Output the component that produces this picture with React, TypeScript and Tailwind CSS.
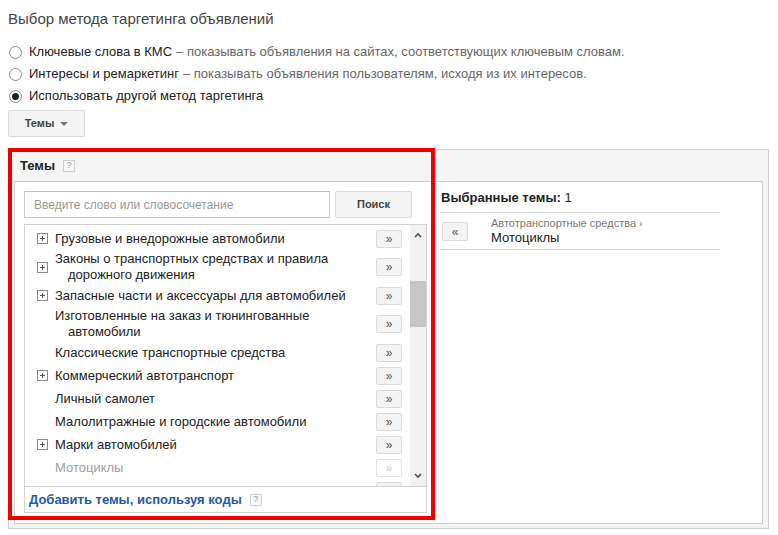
import React from "react";

type Topic = {
  name: string;
  expandable?: boolean;
  disabled?: boolean;
  tall?: boolean;
};

const topics: Topic[] = [
  { name: "Грузовые и внедорожные автомобили", expandable: true },
  { name: "Законы о транспортных средствах и правила дорожного движения", expandable: true, tall: true },
  { name: "Запасные части и аксессуары для автомобилей", expandable: true },
  { name: "Изготовленные на заказ и тюнингованные автомобили", tall: true },
  { name: "Классические транспортные средства" },
  { name: "Коммерческий автотранспорт", expandable: true },
  { name: "Личный самолет" },
  { name: "Малолитражные и городские автомобили" },
  { name: "Марки автомобилей", expandable: true },
  { name: "Мотоциклы", disabled: true },
  // scrolled past the bottom edge, only its button peeks out
  { name: "" },
];

const HelpIcon = () => (
  <span className="inline-flex h-[12px] w-[12px] items-center justify-center border border-[#cfcfcf] bg-[#f7f7f7] text-[9px] leading-none text-[#999]">
    ?
  </span>
);

const Radio = ({ checked }: { checked?: boolean }) => (
  <span className="ml-px mr-[7px] flex h-[13px] w-[13px] shrink-0 items-center justify-center rounded-full border border-[#8a8a8a] bg-white">
    {checked && <span className="h-[7px] w-[7px] rounded-full bg-[#222]" />}
  </span>
);

const PlusBox = () => (
  <span className="relative block h-[11px] w-[11px] border border-[#8c8c8c] bg-white">
    <span className="absolute left-[2px] top-[4px] h-px w-[5px] bg-[#555]" />
    <span className="absolute left-[4px] top-[2px] h-[5px] w-px bg-[#555]" />
  </span>
);

const AddButton = ({ disabled, label = "»" }: { disabled?: boolean; label?: string }) => (
  <button
    className={
      disabled
        ? "ml-[10px] flex h-[18px] w-[26px] shrink-0 items-center justify-center rounded-[2px] border border-[#e4e4e4] bg-white text-[12px] leading-none text-[#cfcfcf]"
        : "ml-[10px] flex h-[18px] w-[26px] shrink-0 items-center justify-center rounded-[2px] border border-[#dcdcdc] bg-[#f4f4f4] text-[12px] leading-none text-[#555]"
    }
  >
    {label}
  </button>
);

const TopicRow = ({ topic }: { topic: Topic }) => (
  <div className={`flex items-center pl-[12px] pr-[8px] ${topic.tall ? "h-[34px]" : "h-[23px]"}`}>
    <span className="w-[11px] shrink-0">{topic.expandable && <PlusBox />}</span>
    <div
      className={`flex-1 pl-[20px] -indent-[13px] text-[13px] leading-[16px] ${
        topic.disabled ? "text-[#a0a0a0]" : "text-[#222]"
      }`}
    >
      {topic.name}
    </div>
    <AddButton disabled={topic.disabled} label={topic.name ? "»" : ""} />
  </div>
);

const Chevron = ({ up }: { up?: boolean }) => (
  <svg width="8" height="6" viewBox="0 0 8 6" className="block">
    <path
      d={up ? "M1 5 L4 2 L7 5" : "M1 1 L4 4 L7 1"}
      fill="none"
      stroke="#505050"
      strokeWidth="1.6"
    />
  </svg>
);

export default function App() {
  return (
    <div className="relative h-[535px] w-[778px] overflow-hidden bg-white font-['Liberation_Sans',Arial,sans-serif]">
      <div className="pl-2 pt-[9px]">
        <h1 className="h-5 text-[15px] leading-5 text-[#444]">Выбор метода таргетинга объявлений</h1>

        <div className="mt-[12px] text-[13px] leading-[22px]">
          <label className="flex h-[22px] items-center">
            <Radio />
            <span className="text-[#222]">Ключевые слова в КМС</span>
            <span className="ml-[4px] text-[#666]">– показывать объявления на сайтах, соответствующих ключевым словам.</span>
          </label>
          <label className="flex h-[22px] items-center">
            <Radio />
            <span className="text-[#222]">Интересы и ремаркетинг</span>
            <span className="ml-[4px] text-[#666]">– показывать объявления пользователям, исходя из их интересов.</span>
          </label>
          <label className="flex h-[22px] items-center">
            <Radio checked />
            <span className="text-[#222]">Использовать другой метод таргетинга</span>
          </label>
        </div>

        <button className="mt-[3px] flex h-[27px] w-[77px] items-center justify-center gap-[6px] rounded-[2px] border border-[#dcdcdc] bg-[#f4f4f4] text-[11px] font-bold text-[#444]">
          Темы
          <span className="h-0 w-0 border-x-[4px] border-t-[4px] border-x-transparent border-t-[#777]" />
        </button>

        <div className="mt-[12px] flex h-[380px] w-[761px] flex-col border border-[#cfcfcf] bg-[#f5f5f5]">
          <div className="flex h-[31px] shrink-0 items-center gap-[8px] pl-[11px]">
            <span className="text-[13px] font-bold text-[#222]">Темы</span>
            <HelpIcon />
          </div>

          <div className="mx-[5px] flex h-[343px] border border-[#cfcfcf] bg-white">
            {/* left: topic browser */}
            <div className="w-[419px] shrink-0 pl-[9px] pt-[9px]">
              <div className="flex gap-[5px]">
                <div className="flex h-[27px] w-[306px] items-center border border-[#cdcdcd] border-t-[#c0c0c0] bg-white pl-[9px] text-[12px] text-[#999]">
                  Введите слово или словосочетание
                </div>
                <button className="h-[27px] w-[77px] rounded-[2px] border border-[#dcdcdc] bg-[#f4f4f4] text-[11px] font-bold text-[#444]">
                  Поиск
                </button>
              </div>

              <div className="mt-[6px] w-[403px] border border-[#d4d4d4]">
                <div className="flex h-[261px]">
                  <div className="flex-1 overflow-hidden pt-[2px]">
                    {topics.map((t, i) => (
                      <TopicRow key={i} topic={t} />
                    ))}
                  </div>
                  <div className="flex w-[16px] flex-col items-center bg-[#f1f1f1]">
                    <div className="flex h-[20px] items-center">
                      <Chevron up />
                    </div>
                    <div className="mt-[36px] h-[46px] w-full bg-[#c6c6c6]" />
                    <div className="flex-1" />
                    <div className="flex h-[20px] items-center">
                      <Chevron />
                    </div>
                  </div>
                </div>
                <div className="flex h-[26px] items-center gap-[8px] border-t border-[#d4d4d4] pl-[4px]">
                  <span className="text-[13px] font-bold text-[#1f5aa8]">Добавить темы, используя коды</span>
                  <HelpIcon />
                </div>
              </div>
            </div>

            {/* right: selected topics */}
            <div className="w-[286px] pl-[6px]">
              <div className="border-b border-[#d8d8d8] pb-[6px] pl-px pt-[8px] text-[13px] leading-[16px] text-[#222]">
                <span className="font-bold">Выбранные темы:</span> 1
              </div>
              <div className="flex items-start border-b border-[#d8d8d8] pb-[3px]">
                <button className="ml-[2px] mt-[9px] flex h-[19px] w-[26px] items-center justify-center rounded-[2px] border border-[#dcdcdc] bg-[#f4f4f4] text-[12px] leading-none text-[#555]">
                  «
                </button>
                <div className="ml-[23px] pt-[3px]">
                  <div className="text-[11px] leading-[14px] text-[#777]">Автотранспортные средства ›</div>
                  <div className="text-[13px] leading-[16px] text-[#222]">Мотоциклы</div>
                </div>
              </div>
            </div>
          </div>
        </div>
      </div>

      {/* annotation frame */}
      <div className="pointer-events-none absolute left-[8px] top-[148px] h-[372px] w-[427px] border-[4px] border-[#ee0000]" />
    </div>
  );
}
